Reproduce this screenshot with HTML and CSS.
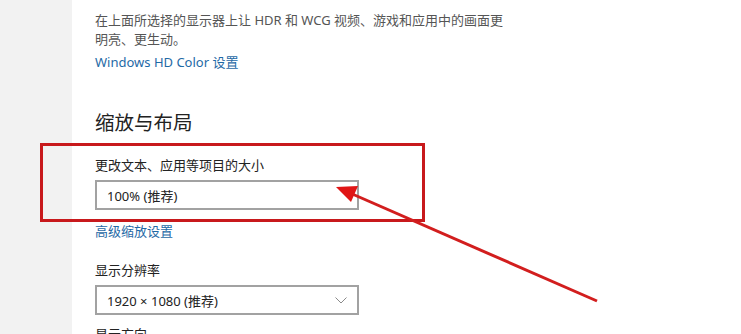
FILE: index.html
```html
<!DOCTYPE html>
<html lang="zh-CN">
<head>
  <meta charset="UTF-8">
  <title>显示设置</title>
  <link rel="stylesheet" href="styles.css">
</head>
<body>

<div class="page">
  <div class="sidebar"></div>

  <div class="content">
    <p class="desc">在上面所选择的显示器上让 HDR 和 WCG 视频、游戏和应用中的画面更<br>明亮、更生动。</p>
    <a class="link first-link" href="#">Windows HD Color 设置</a>

    <h2>缩放与布局</h2>

    <label class="field-label scale-label">更改文本、应用等项目的大小</label>
    <div class="dropdown">
      <span>100% (推荐)</span>
    </div>
    <a class="link scale-link" href="#">高级缩放设置</a>

    <label class="field-label">显示分辨率</label>
    <div class="dropdown">
      <span>1920 × 1080 (推荐)</span>
      <svg class="chevron" width="12" height="7" viewBox="0 0 12 7">
        <path d="M0.5 0.5 L6 6 L11.5 0.5" fill="none" stroke="#8a8a8a" stroke-width="1"/>
      </svg>
    </div>

    <label class="field-label last-label">显示方向</label>
  </div>
</div>

<!-- annotation drawn on top of the screenshot -->
<div class="highlight"></div>
<svg class="arrow" width="741" height="334" viewBox="0 0 741 334">
  <line x1="597" y1="301" x2="350" y2="193" stroke="#d21e1e" stroke-width="3"/>
  <polygon points="336,187 358,186 351,202" fill="#e01515"/>
</svg>

</body>
</html>
```

FILE: styles.css
```css
body {
  margin: 0;
  font-family: "Noto Sans", "Noto Sans CJK SC", sans-serif;
  background: #fff;
  overflow: hidden;
}
.page {
  display: flex;
  height: 334px;
  overflow: hidden;
}
.sidebar {
  width: 72px;
  background: #f2f2f2;
}
.content {
  padding: 11px 0 0 23px;
  flex: 1;
}
.desc {
  margin: 0;
  font-size: 13px;
  line-height: 19px;
  color: #555;
}
.link {
  display: block;
  font-size: 13px;
  line-height: 19px;
  color: #1f6aa6;
  text-decoration: none;
}
.first-link {
  margin-top: 4px;
}
h2 {
  margin: 37px 0 0;
  font-size: 19.5px;
  line-height: 28px;
  font-weight: normal;
  color: #222;
}
.field-label {
  display: block;
  margin-top: 20px;
  font-size: 13px;
  line-height: 19px;
  color: #222;
}
.scale-label {
  margin-top: 19px;
}
.last-label {
  margin-top: 10px;
}
.dropdown {
  box-sizing: border-box;
  width: 264px;
  height: 30px;
  margin-top: 5px;
  padding: 0 8px 0 10px;
  border: 2px solid #a2a2a2;
  display: flex;
  align-items: center;
  justify-content: space-between;
  font-size: 13px;
  color: #222;
}
.chevron {
  margin-right: 2px;
}
.scale-link {
  margin-top: 12px;
}
.highlight {
  position: absolute;
  left: 40px;
  top: 143px;
  width: 379px;
  height: 73px;
  border: 3px solid #c8191c;
}
.arrow {
  position: absolute;
  left: 0;
  top: 0;
  pointer-events: none;
}
```
